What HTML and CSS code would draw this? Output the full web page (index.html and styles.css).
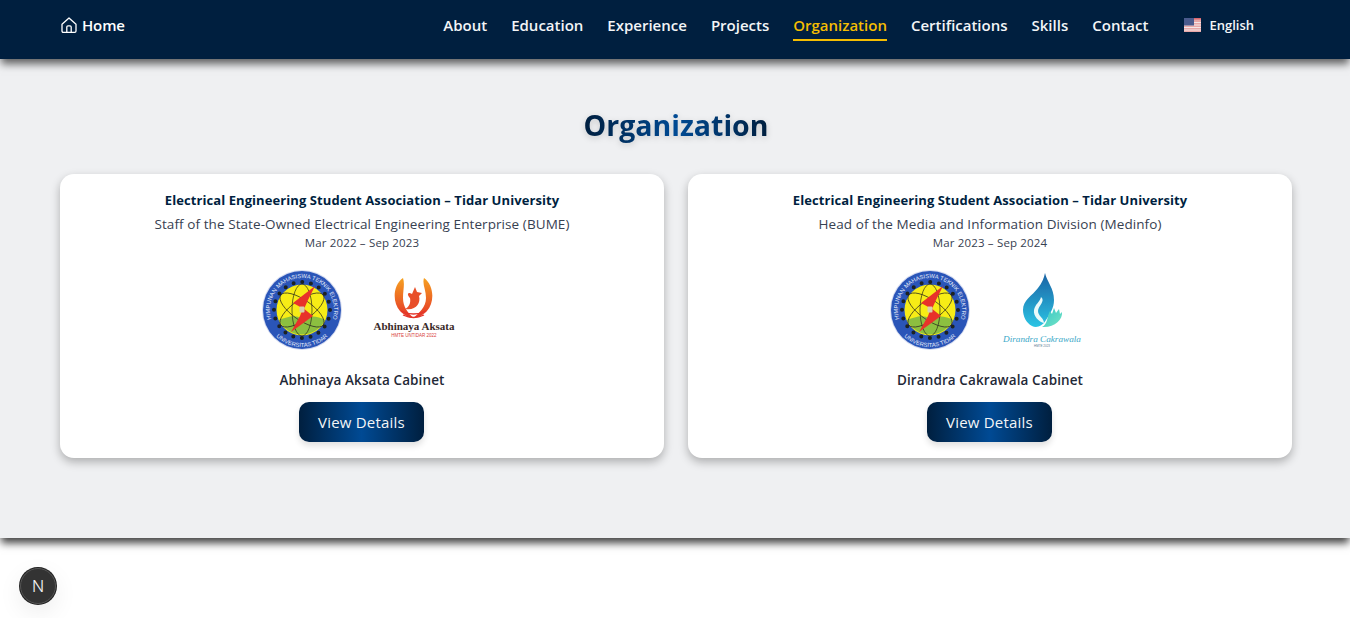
FILE: index.html
```html
<!DOCTYPE html>
<html>

<head>
	<title>Organization</title>
	<link rel="stylesheet" href="styles.css">
</head>

<body>

	<!--LOGO SHAPES USED BY BOTH CARDS-->
	<svg class="defs" width="0" height="0">
		<defs>
			<filter id="soft"><feGaussianBlur stdDeviation="0.3" /></filter>
			<linearGradient id="drop" x1="0" y1="0" x2="0" y2="1">
				<stop offset="0" stop-color="#1a62a4" />
				<stop offset="1" stop-color="#2cc4e4" />
			</linearGradient>
			<linearGradient id="hand" x1="0" y1="0" x2="1" y2="1">
				<stop offset="0" stop-color="#35c5c8" />
				<stop offset="1" stop-color="#74e4c4" />
			</linearGradient>
			<linearGradient id="fire" x1="0" y1="0" x2="0" y2="1">
				<stop offset="0" stop-color="#f6a11f" />
				<stop offset="1" stop-color="#e4342a" />
			</linearGradient>
			<path id="ringTop" d="M12.300 56 A32 32 0 1 1 67.700 56" />
			<path id="ringBottom" d="M11.700 63.800 A37 37 0 0 0 68.300 63.800" />
			<symbol id="hmte" viewBox="0 0 80 80">
				<g filter="url(#soft)">
					<circle cx="40" cy="40" r="40" fill="#d6dcf0" />
					<circle cx="40" cy="40" r="39" fill="#2b55b8" />
					<circle cx="40" cy="40" r="25.500" fill="#f7ec12" />
					<circle cx="40" cy="40" r="28" fill="none" stroke="#1c2020" stroke-width="4" stroke-linecap="round" stroke-dasharray="0 8.800" />
					<path d="M17 50 C26 47 33 44 40 49 C48 45 56 46 63 50 A25.500 25.500 0 0 1 17 50 Z" fill="#8cbf3f" />
					<g fill="none" stroke="#2a2a20" stroke-width="0.700">
						<ellipse cx="40" cy="40" rx="26" ry="10" transform="rotate(35 40 40)" />
						<ellipse cx="40" cy="40" rx="26" ry="10" transform="rotate(-35 40 40)" />
						<ellipse cx="40" cy="40" rx="26" ry="10" transform="rotate(90 40 40)" />
					</g>
					<path d="M53 16 L31 33 L42 39 L46 30 Z" fill="#e8332b" />
					<path d="M41 38 L51 46 L29 62 L38 46 Z" fill="#e8332b" />
					<rect x="37.500" y="36.500" width="5" height="6" rx="1" fill="#d8d0b0" />
				</g>
				<text class="ring-text"><textPath href="#ringTop" startOffset="50%" text-anchor="middle">HIMPUNAN MAHASISWA TEKNIK ELEKTRO</textPath></text>
				<text class="ring-text"><textPath href="#ringBottom" startOffset="50%" text-anchor="middle">UNIVERSITAS TIDAR</textPath></text>
			</symbol>
		</defs>
	</svg>

	<nav class="navbar">
		<a class="home-link" href="#">
			<svg class="home-icon" viewBox="0 0 16 16" fill="none" stroke="#fff" stroke-width="1.300" stroke-linejoin="round" stroke-linecap="round">
				<path d="M1 7.300 L8 1 L15 7.300 V14 Q15 15.300 13.700 15.300 H2.300 Q1 15.300 1 14 Z" />
				<path d="M5.800 15.300 V10 Q5.800 8.800 7 8.800 H9 Q10.200 8.800 10.200 10 V15.300" />
			</svg>
			Home
		</a>
		<div class="nav-links">
			<a href="#">About</a>
			<a href="#">Education</a>
			<a href="#">Experience</a>
			<a href="#">Projects</a>
			<a href="#" class="active">Organization</a>
			<a href="#">Certifications</a>
			<a href="#">Skills</a>
			<a href="#">Contact</a>
		</div>
		<div class="lang">
			<svg class="flag" viewBox="0 0 17 14">
				<rect width="17" height="14" fill="#e8a8a8" />
				<rect y="0" width="17" height="1.500" fill="#d9666e" />
				<rect y="4" width="17" height="1" fill="#f4e6e6" />
				<rect y="6.500" width="17" height="1" fill="#f4e6e6" />
				<rect y="9" width="17" height="1" fill="#f4e6e6" />
				<rect y="11.500" width="17" height="1" fill="#f4e6e6" />
				<rect width="10" height="7.500" fill="#4a5a8c" />
			</svg>
			English
		</div>
	</nav>

	<section class="organization">
		<h2 class="section-title">Organization</h2>
		<div class="card-grid">

			<div class="card">
				<h3 class="org-name">Electrical Engineering Student Association – Tidar University</h3>
				<p class="role">Staff of the State-Owned Electrical Engineering Enterprise (BUME)</p>
				<p class="period">Mar 2022 – Sep 2023</p>
				<div class="logos">
					<svg class="logo-round"><use href="#hmte" /></svg>
					<svg class="logo-wide" viewBox="0 0 96 80">
						<g filter="url(#soft)">
							<path d="M37 8 C27 15 26 32 34 41 C38 45 43 48 47.500 48 C42 43 37 37 37 28 C37 20 39 14 37 8 Z" fill="url(#fire)" />
							<path d="M58 8 C68 15 69 32 61 41 C57 45 52 48 47.500 48 C53 43 60 37 60 28 C60 20 56 14 58 8 Z" fill="url(#fire)" />
							<path d="M39 39 C43 37 45 33 44 28 C41 25 41 21 46 24 L49 17 L51 22 L56 23 L53 26 C55 33 50 41 39 39 Z" fill="#e8502a" />
							<path d="M35 41 Q47.500 47 60 41 M37 45 Q47.500 50 58 45" fill="none" stroke="#e4342a" stroke-width="1.300" />
						</g>
						<text class="abhinaya" x="48" y="60" text-anchor="middle">Abhinaya Aksata</text>
						<text class="abhinaya-sub" x="48" y="67" text-anchor="middle">HMTE UNTIDAR 2022</text>
					</svg>
				</div>
				<p class="cabinet">Abhinaya Aksata Cabinet</p>
				<button class="details-btn">View Details</button>
			</div>

			<div class="card">
				<h3 class="org-name">Electrical Engineering Student Association – Tidar University</h3>
				<p class="role">Head of the Media and Information Division (Medinfo)</p>
				<p class="period">Mar 2023 – Sep 2024</p>
				<div class="logos">
					<svg class="logo-round"><use href="#hmte" /></svg>
					<svg class="logo-wide" viewBox="0 0 96 80">
						<g filter="url(#soft)">
							<path d="M51 3 C53 12 60 18 60 30 C60 38 56 44 52 50 C48 57 42 58 38 56 C32 53 29 46 29 40 C29 30 38 26 44 18 C48 13 50 8 51 3 Z" fill="url(#drop)" />
							<path d="M47 27 C52 31 44 36 44 41 C44 46 50 48 50 53 C45 52 39 46 40 40 C41 34 46 32 47 27 Z" fill="#eafafa" />
							<path d="M48 57 C54 54 53 46 56 41 L58 44 L60 38 L62 43 L65 39 L66 44 L68 42 C69 50 60 58 48 57 Z" fill="url(#hand)" />
						</g>
						<text class="dirandra" x="48" y="72" text-anchor="middle">Dirandra Cakrawala</text>
						<text class="dirandra-sub" x="48" y="77" text-anchor="middle">HMTE 2023</text>
					</svg>
				</div>
				<p class="cabinet">Dirandra Cakrawala Cabinet</p>
				<button class="details-btn">View Details</button>
			</div>

		</div>
	</section>

	<div class="dev-badge">N</div>

</body>

</html>
```

FILE: styles.css
```css
* {
	box-sizing: border-box;
}

body {
	margin: 0;
	height: 618px;
	overflow: hidden;
	background-color: #fff;
	font-family: "Open Sans", "Noto Sans", sans-serif;
}

a {
	color: inherit;
	text-decoration: none;
}

.defs {
	display: block;
	height: 0;
}

/* top bar */
.navbar {
	position: relative;
	z-index: 2;
	display: flex;
	align-items: flex-start;
	height: 59px;
	padding: 15px 96px 0 61px;
	background-color: #001f3f;
	color: #f3f5f7;
	box-shadow: 0 6px 8px -1px rgba(0, 0, 0, 0.6);
}

.home-link {
	display: flex;
	align-items: center;
	gap: 5px;
	font-size: 15px;
	line-height: 20px;
	font-weight: 600;
	letter-spacing: -0.15px;
	color: #fff;
}

.home-icon {
	width: 16px;
	height: 16px;
}

.nav-links {
	display: flex;
	gap: 24px;
	margin-left: auto;
	font-size: 15px;
	line-height: 20px;
	font-weight: 600;
}

.nav-links a {
	padding-bottom: 4px;
	border-bottom: 2px solid transparent;
}

.nav-links a.active {
	color: #f5bd02;
	border-bottom-color: #f5bd02;
}

.lang {
	display: flex;
	align-items: center;
	gap: 8px;
	margin-left: 36px;
	font-size: 13px;
	line-height: 20px;
	font-weight: 600;
}

.flag {
	width: 17px;
	height: 14px;
}

/* main section */
.organization {
	position: relative;
	z-index: 1;
	height: 479px;
	padding: 46px 58px 0 60px;
	background-color: #eff0f2;
	box-shadow: 0 6px 8px -1px rgba(0, 0, 0, 0.75);
}

.section-title {
	width: max-content;
	margin: 0 auto 28px;
	font-size: 28.500px;
	line-height: 41px;
	font-weight: 700;
	background: linear-gradient(90deg, #001f3f, #004a94, #001f3f);
	-webkit-background-clip: text;
	background-clip: text;
	color: transparent;
	filter: drop-shadow(0 2px 3px rgba(0, 0, 0, 0.16));
}

.card-grid {
	display: grid;
	grid-template-columns: 1fr 1fr;
	gap: 24px;
}

.card {
	display: flex;
	flex-direction: column;
	align-items: center;
	height: 284px;
	padding-top: 16px;
	background-color: #fff;
	border-radius: 14px;
	box-shadow: 0 4px 10px rgba(0, 0, 0, 0.28);
	text-align: center;
}

.org-name {
	margin: 0;
	font-size: 13px;
	line-height: 20px;
	font-weight: 700;
	letter-spacing: 0.08px;
	color: #001f3f;
}

.role {
	margin: 4px 0 0;
	font-size: 13.500px;
	line-height: 20px;
	letter-spacing: 0.08px;
	color: #374151;
}

.period {
	margin: 0;
	font-size: 11.500px;
	line-height: 18px;
	letter-spacing: 0.16px;
	color: #374151;
}

.logos {
	display: flex;
	gap: 24px;
	margin-top: 18px;
}

.logo-round {
	width: 80px;
	height: 80px;
}

.logo-wide {
	width: 96px;
	height: 80px;
}

.ring-text {
	font-family: "Liberation Sans", sans-serif;
	font-size: 5.800px;
	fill: #e6ecfa;
}

.abhinaya {
	font-family: "Liberation Serif", serif;
	font-size: 11px;
	font-weight: 700;
	fill: #3a2a28;
}

.abhinaya-sub {
	font-family: "Liberation Sans", sans-serif;
	font-size: 4.500px;
	fill: #d8403a;
}

.dirandra {
	font-family: "Liberation Serif", serif;
	font-size: 9.200px;
	font-style: italic;
	fill: #3aa8c8;
}

.dirandra-sub {
	font-family: "Liberation Sans", sans-serif;
	font-size: 3px;
	fill: #5a7a90;
}

.cabinet {
	margin: 20px 0 0;
	font-size: 13.500px;
	line-height: 20px;
	font-weight: 600;
	letter-spacing: 0.1px;
	color: #1f2937;
}

.details-btn {
	width: 125px;
	height: 40px;
	margin: 12px 1px 0 0;
	padding: 0;
	border: 0;
	border-radius: 10px;
	background: linear-gradient(90deg, #001f3f, #004a94, #001f3f);
	box-shadow: 0 4px 6px rgba(0, 0, 0, 0.12);
	color: #f3f5f7;
	font-family: inherit;
	font-size: 15px;
	letter-spacing: 0.2px;
}

/* corner badge */
.dev-badge {
	position: absolute;
	left: 20px;
	top: 568px;
	width: 36px;
	height: 36px;
	display: flex;
	align-items: center;
	justify-content: center;
	border-radius: 50%;
	background-color: #333;
	border: 1px solid #555;
	box-shadow: 0 0 0 1px #222, 0 8px 24px rgba(0, 0, 0, 0.08);
	color: #f2f2f2;
	font-family: "Inter", sans-serif;
	font-size: 16px;
	font-weight: 300;
}
```
